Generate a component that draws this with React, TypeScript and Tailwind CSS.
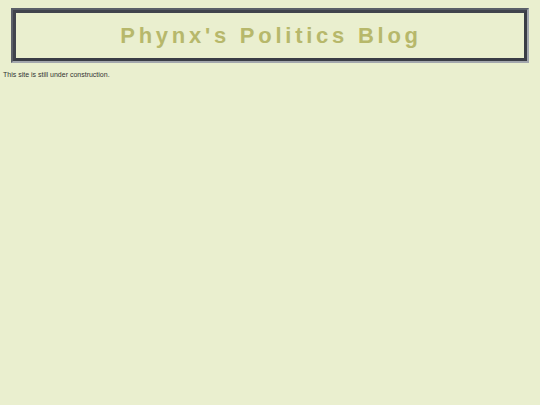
export default function App() {
  return (
    <div className="min-h-[405px] bg-[#eaefcf] pt-2 font-['Liberation_Sans',Arial,sans-serif]">
      <header className="mx-[11px] border-[2px] border-t-[#5b5f68] border-l-[#5b5f68] border-b-[#a3a7ad] border-r-[#a3a7ad]">
        <div className="border-[3px] border-[#41444d] border-b-[#3a3d45] border-r-[#3a3d45]">
          <h1 className="flex h-[45px] items-center justify-center pl-[2px] text-[22px] font-bold tracking-[3.75px] text-[#b7b86b]">
            Phynx's Politics Blog
          </h1>
        </div>
      </header>
      <p className="mt-[7px] px-[3px] text-[7px] leading-[9px] text-[#333]">This site is still under construction.</p>
    </div>
  );
}
